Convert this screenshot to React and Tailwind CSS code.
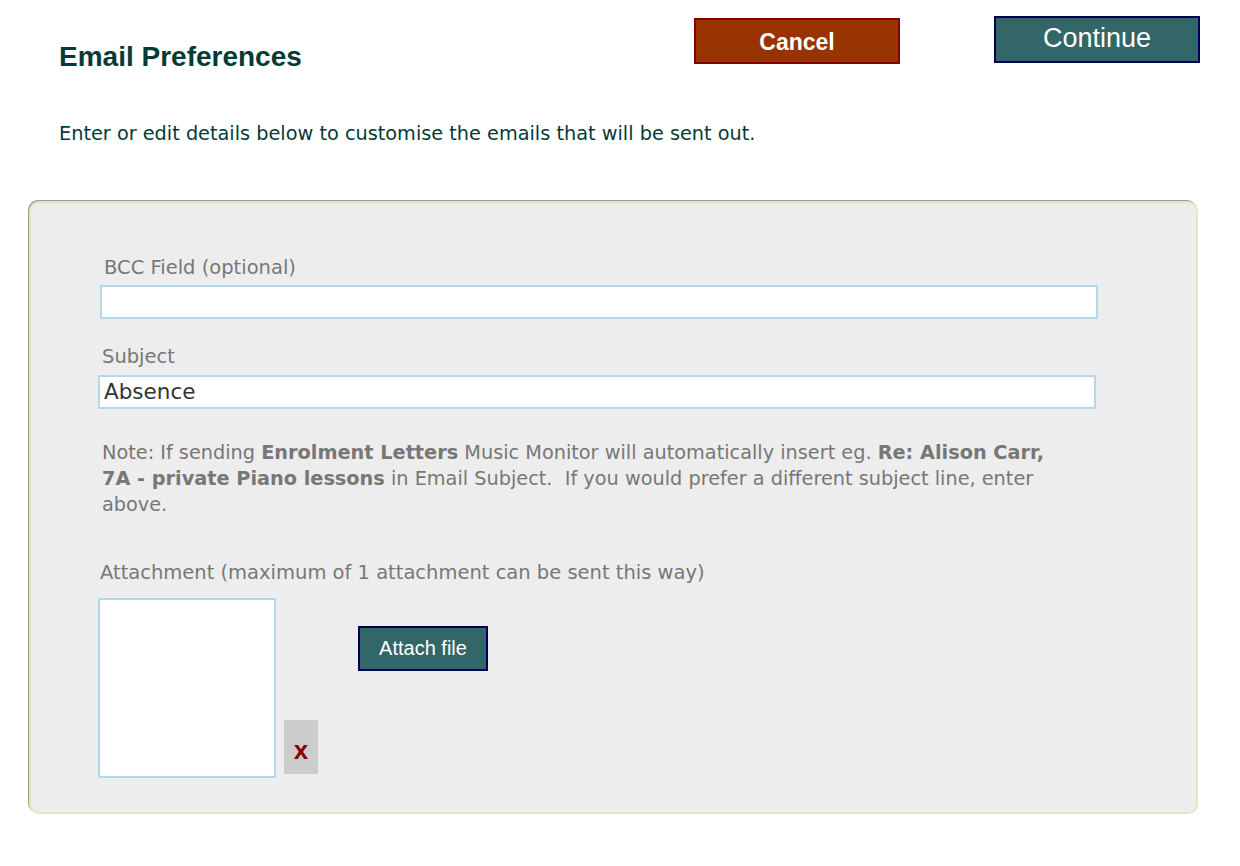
import { useState } from 'react';

const body = { fontFamily: '"DejaVu Sans", Verdana, sans-serif' };
const arial = { fontFamily: '"Liberation Sans", Arial, sans-serif' };

export default function App() {
  const [bcc, setBcc] = useState('');
  const [subject, setSubject] = useState('Absence');

  return (
    <div className="min-h-screen bg-white" style={body}>
      <div className="flex items-start pl-[59px] pr-[40px] pt-[16px]">
        <h1 className="mt-[20px] text-[28px] font-bold text-[#053b36]" style={arial}>
          Email Preferences
        </h1>
        <div className="ml-auto flex items-start gap-[94px]">
          <button className="mt-[2px] w-[206px] h-[46px] bg-[#993300] border-2 border-[#880000] text-white text-[23px] font-bold pt-[2px]" style={arial}>
            Cancel
          </button>
          <button className="w-[206px] h-[47px] bg-[#336666] border-2 border-[#000055] text-white text-[27px] pb-[2px]" style={arial}>
            Continue
          </button>
        </div>
      </div>

      <p className="pl-[59px] mt-[42px] text-[19.3px] text-[#053b36]">
        Enter or edit details below to customise the emails that will be sent out.
      </p>

      <div className="ml-[29px] mr-[42px] mt-[52px] h-[613px] rounded-[10px] border-2 border-[#e6e6bc] bg-[#ededed] shadow-[-1px_-1px_0_#9a9a9a] pl-[69px] pt-[52px] text-[#777]">
        <label className="block pl-[4px] text-[19.5px] leading-[26px]">BCC Field (optional)</label>
        <input
          value={bcc}
          onChange={(e) => setBcc(e.target.value)}
          className="mt-[4px] block w-[998px] h-[34px] bg-white border-2 border-[#b4d8e8] px-[4px] text-[21.5px] text-[#333] outline-none"
        />

        <label className="block mt-[25px] pl-[2px] text-[19.5px] leading-[26px]">Subject</label>
        <input
          value={subject}
          onChange={(e) => setSubject(e.target.value)}
          className="mt-[5px] -ml-[2px] block w-[998px] h-[34px] bg-white border-2 border-[#b4d8e8] px-[4px] text-[21.5px] text-[#333] outline-none"
        />

        <p className="mt-[31px] pl-[2px] w-[970px] text-[19.3px] leading-[26px]">
          Note: If sending <b>Enrolment Letters</b> Music Monitor will automatically insert eg. <b>Re: Alison Carr, 7A - private Piano lessons</b> in Email Subject.&nbsp; If you would prefer a different subject line, enter above.
        </p>

        <label className="block mt-[42px] text-[19.5px] leading-[26px]">
          Attachment (maximum of 1 attachment can be sent this way)
        </label>
        <div className="flex items-start mt-[12px] -ml-[2px]">
          <div className="w-[178px] h-[180px] bg-white border-2 border-[#b4d8e8]" />
          <button className="mt-[122px] ml-[8px] w-[34px] h-[54px] bg-[#cccccc] text-[#880000] text-[26px] font-bold pt-[8px]" style={arial}>
            x
          </button>
          <button className="mt-[28px] ml-[40px] w-[130px] h-[45px] bg-[#336666] border-2 border-[#000055] text-white text-[20px]" style={arial}>
            Attach file
          </button>
        </div>
      </div>
    </div>
  );
}
